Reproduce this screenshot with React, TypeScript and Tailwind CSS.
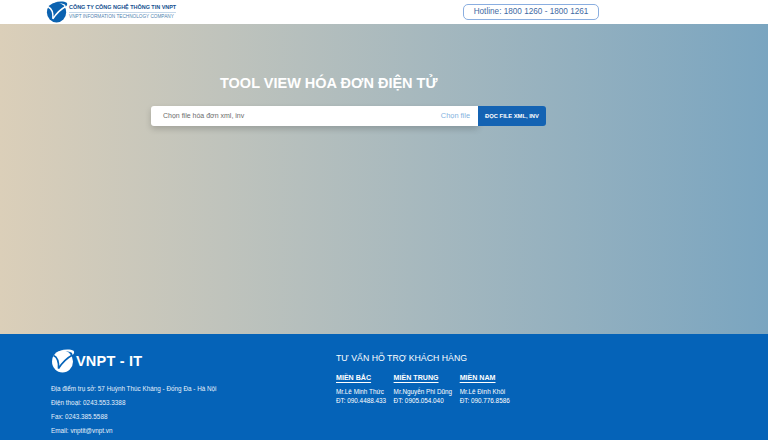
const VnptLogo = ({ className, body, cut }: { className: string; body: string; cut: string }) => (
  <svg viewBox="0 0 24 24" className={className}>
    <ellipse cx="11.5" cy="12.5" rx="10.5" ry="11" fill={body} />
    <path d="M2.5 6.5C6 8 8 12 7.5 19.5 11 14 15 9.5 21.5 6" fill="none" stroke={cut} strokeWidth="1.6" />
    <path d="M9 1.5C14 .2 20 .2 22.6 1.8 23.6 3 23.2 5 21.5 6 21.6 4 20 3 17 2.6 14 2.2 11.5 2 9 1.5Z" fill={body} />
  </svg>
);

const regions = [
  { title: 'MIỀN BẮC', name: 'Mr.Lê Minh Thức', phone: 'ĐT: 090.4488.433' },
  { title: 'MIỀN TRUNG', name: 'Mr.Nguyễn Phi Dũng', phone: 'ĐT: 0905.054.040' },
  { title: 'MIỀN NAM', name: 'Mr.Lê Đình Khôi', phone: 'ĐT: 090.776.8586' },
];

const contacts = [
  'Địa điểm trụ sở: 57 Huỳnh Thúc Kháng - Đống Đa - Hà Nội',
  'Điện thoại: 0243.553.3388',
  'Fax: 0243.385.5588',
  'Email: vnptit@vnpt.vn',
];

export default function App() {
  return (
    <div className="h-[440px] w-[768px] overflow-hidden flex flex-col bg-white font-['Liberation_Sans',sans-serif]">
      {/* Header */}
      <header className="h-6 shrink-0 bg-white flex items-center justify-between pl-[46px] pr-[169px]">
        <div className="flex items-center gap-[1px]">
          <VnptLogo className="w-[22px] h-6" body="#0b62b0" cut="#ffffff" />
          <div className="flex flex-col">
            <span className="text-[5.45px] leading-[7px] font-bold text-[#14508f] whitespace-nowrap">CÔNG TY CÔNG NGHỆ THÔNG TIN VNPT</span>
            <span className="border-t border-[#c5d8ea] mt-[1px] pt-[1px] text-[4.7px] leading-[6px] text-[#4f7fb0] whitespace-nowrap">VNPT INFORMATION TECHNOLOGY COMPANY</span>
          </div>
        </div>
        <div className="w-[136px] h-4 rounded-[5px] border-[1.5px] border-[#8aaee0] flex items-center justify-center text-[8.2px] text-[#3f6aa3] whitespace-nowrap">
          Hotline: 1800 1260 - 1800 1261
        </div>
      </header>

      {/* Main */}
      <main className="h-[310px] shrink-0 bg-gradient-to-r from-[#dbcfb9] to-[#7aa5c0] flex flex-col pl-[151px] pt-[49px]">
        <h1 className="w-[395px] pl-[69px] text-[14.5px] leading-5 font-bold text-white whitespace-nowrap">TOOL VIEW HÓA ĐƠN ĐIỆN TỬ</h1>
        <div className="mt-[13px] w-[395px] h-5 flex">
          <div className="flex-1 bg-white rounded-l-[3px] shadow-[0_3px_6px_rgba(0,0,0,0.18)] flex items-center justify-between pl-3 pr-2 text-[7px]">
            <span className="text-[#6b6b6b]">Chọn file hóa đơn xml, inv</span>
            <span className="text-[7.4px] text-[#7fb2de]">Chọn file</span>
          </div>
          <button className="w-[68px] bg-[#1463b3] rounded-r-[3px] text-white text-[5.8px] font-bold whitespace-nowrap">ĐỌC FILE XML, INV</button>
        </div>
      </main>

      {/* Footer */}
      <footer className="flex-1 bg-[#0563b8] flex text-white pl-[51px] pt-[15px]">
        <div className="w-[285px] shrink-0">
          <div className="flex items-center gap-[1px] h-6">
            <VnptLogo className="w-6 h-6" body="#ffffff" cut="#0563b8" />
            <span className="text-[14.5px] font-bold leading-5 tracking-[0.2px]">VNPT - IT</span>
          </div>
          <ul className="mt-[11px] flex flex-col gap-[4px] text-[6.35px] leading-[10px] text-[#e6f0fa]">
            {contacts.map((line) => (
              <li key={line}>{line}</li>
            ))}
          </ul>
        </div>
        <div className="pt-[2px]">
          <h2 className="text-[8.75px] leading-[14px] whitespace-nowrap">TƯ VẤN HỖ TRỢ KHÁCH HÀNG</h2>
          <div className="mt-[9px] flex gap-[7.5px]">
            {regions.map((r) => (
              <div key={r.title} className="text-[6.35px] leading-[9px] whitespace-nowrap">
                <div className="text-[7.1px] font-bold underline underline-offset-2 mb-[4px]">{r.title}</div>
                <div>{r.name}</div>
                <div>{r.phone}</div>
              </div>
            ))}
          </div>
        </div>
      </footer>
    </div>
  );
}
